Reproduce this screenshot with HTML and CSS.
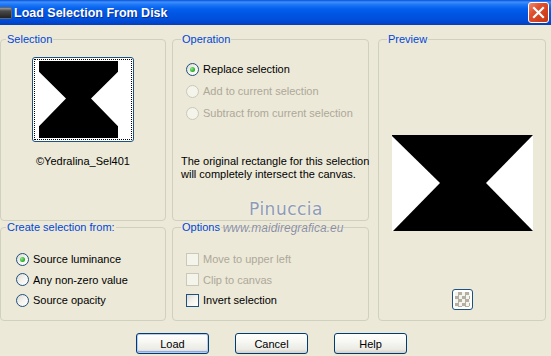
FILE: index.html
```html
<!DOCTYPE html>
<html lang="en">
<head>
  <meta charset="UTF-8">
  <title>Load Selection From Disk</title>
  <link rel="stylesheet" href="styles.css">
</head>
<body>
  <div class="titlebar">
    <span class="app-icon"></span>
    <span class="title">Load Selection From Disk</span>
    <span class="close-btn">
      <svg width="13" height="13" viewBox="0 0 13 13">
        <path d="M2 2L11 11M11 2L2 11" stroke="#fff" stroke-width="2.2" stroke-linecap="square"></path>
      </svg>
    </span>
  </div>

  <div class="dialog">
    <!-- top left: thumbnail of the selection file -->
    <fieldset class="group group-left sel-group">
      <legend>Selection</legend>
      <div class="thumb">
        <div class="thumb-focus">
          <svg width="91" height="77" viewBox="0 0 91 78" preserveAspectRatio="none">
            <rect width="91" height="78" fill="#fff"></rect>
            <polygon points="0,0 79,0 79,11 52,38 79,66 79,78 0,78 0,66 27,38 0,11" fill="#000"></polygon>
          </svg>
        </div>
      </div>
      <div class="thumb-name">©Yedralina_Sel401</div>
    </fieldset>

    <fieldset class="group op-group">
      <legend>Operation</legend>
      <div class="radio-list op-list">
        <label class="opt"><span class="radio checked"></span>Replace selection</label>
        <label class="opt disabled"><span class="radio"></span>Add to current selection</label>
        <label class="opt disabled"><span class="radio"></span>Subtract from current selection</label>
      </div>
      <p class="op-note">The original rectangle for this selection<br>will completely intersect the canvas.</p>
    </fieldset>

    <fieldset class="group preview-group">
      <legend>Preview</legend>
      <div class="preview-body">
        <svg class="preview-img" width="141" height="96" viewBox="0 0 141 96">
          <rect width="141" height="96" fill="#000"></rect>
          <polygon points="0,1 48,48 1,96 0,96" fill="#fff"></polygon>
          <polygon points="141,0 94,48 141,96" fill="#fff"></polygon>
        </svg>
        <span class="checker-btn"><span class="checker"></span></span>
      </div>
    </fieldset>

    <fieldset class="group group-left create-group">
      <legend>Create selection from:</legend>
      <div class="radio-list small-list">
        <label class="opt"><span class="radio checked"></span>Source luminance</label>
        <label class="opt"><span class="radio"></span>Any non-zero value</label>
        <label class="opt"><span class="radio"></span>Source opacity</label>
      </div>
    </fieldset>

    <fieldset class="group options-group">
      <legend>Options</legend>
      <div class="radio-list small-list">
        <label class="opt disabled"><span class="check"></span>Move to upper left</label>
        <label class="opt disabled"><span class="check"></span>Clip to canvas</label>
        <label class="opt"><span class="check"></span>Invert selection</label>
      </div>
    </fieldset>
  </div>

  <div class="buttons">
    <button class="btn default">Load</button>
    <button class="btn">Cancel</button>
    <button class="btn">Help</button>
  </div>

  <div class="watermark">
    <span class="wm-name">Pinuccia</span>
    <span class="wm-url">www.maidiregrafica.eu</span>
  </div>
</body>
</html>
```

FILE: styles.css
```css
* {
  box-sizing: border-box;
}

:root {
  --face: #ece9d8;
  --group-border: #d0d0bf;
  --legend: #0046d5;
  --control-border: #1c5180;
  --disabled: #aca899;
  --disabled-border: #cac8bb;
}

body {
  margin: 0;
  width: 551px;
  height: 356px;
  overflow: hidden;
  position: relative;
  background-color: var(--face);
  font-family: 'Liberation Sans', Arial, sans-serif;
  font-size: 11px;
  color: #000;
}

/* window caption */
.titlebar {
  height: 25px;
  display: flex;
  align-items: center;
  padding-right: 2px;
  background: linear-gradient(to bottom, #0850d8 0, #3d8ffb 2px, #1b74f5 5px, #0360ec 9px, #0055e3 14px, #0050dc 19px, #0045cc 23px, #0a3fb6 25px);
}

.app-icon {
  width: 12px;
  height: 12px;
  margin-top: 1px;
  border-radius: 0 2px 2px 0;
  background: linear-gradient(to bottom, #9a9a9a 0, #4a4a4a 3px, #222 100%);
  border: 1px solid #666;
  border-left: none;
}

.title {
  margin-left: 2px;
  flex: 1;
  color: #fff;
  font-weight: bold;
  font-size: 12.5px;
  text-shadow: 1px 1px 0 #0a2f9c;
}

.close-btn {
  width: 21px;
  height: 21px;
  display: flex;
  align-items: center;
  justify-content: center;
  border: 1px solid #fff;
  border-radius: 3px;
  background: linear-gradient(135deg, #ee8a70 0, #e0512f 35%, #d2401c 70%, #c23812 100%);
}

/* group boxes */
.dialog {
  display: grid;
  grid-template-columns: 166px 203px 177px;
  grid-template-rows: 188px 100px;
  padding-top: 8px;
}

.group {
  margin: 0;
  padding: 0;
  min-width: 0;
  border: 1px solid var(--group-border);
  border-radius: 4px;
}

.group legend {
  color: var(--legend);
  padding: 0 1px;
  margin-left: 8px;
  line-height: 13px;
}

.group-left legend {
  margin-left: 5px;
}

.sel-group { grid-column: 1; grid-row: 1; }
.op-group { grid-column: 2; grid-row: 1; margin-left: 6px; }
.preview-group { grid-column: 3; grid-row: 1 / span 2; margin-left: 9px; }
.create-group { grid-column: 1; grid-row: 2; }
.options-group { grid-column: 2; grid-row: 2; margin-left: 6px; }

/* selection thumbnail */
.thumb {
  width: 102px;
  height: 85px;
  margin: 11px auto 0;
  padding: 1px;
  border: 1px solid var(--control-border);
  border-radius: 3px;
  background-color: #fff;
}

.thumb-focus {
  height: 100%;
  padding: 1px 1px 0 4px;
  border: 1px dotted #000;
}

.thumb-focus svg {
  display: block;
}

.thumb-name {
  margin-top: 13px;
  text-align: center;
  line-height: 13px;
}

/* radios and checkboxes */
.radio-list {
  display: flex;
  flex-direction: column;
}

.opt {
  display: flex;
  align-items: center;
  gap: 4px;
  height: 22px;
}

.op-list {
  margin: 12px 0 0 13px;
}

.small-list {
  margin-top: 15px;
}

.small-list .opt {
  height: 20.5px;
}

.create-group .small-list {
  margin-left: 15px;
}

.options-group .small-list {
  margin-left: 13px;
}

.radio {
  width: 13px;
  height: 13px;
  flex: none;
  border-radius: 50%;
  border: 1px solid var(--control-border);
  background: linear-gradient(135deg, #dcdad0 0, #f4f3ee 50%, #fff 100%);
  display: flex;
  align-items: center;
  justify-content: center;
}

.radio.checked::after {
  content: '';
  width: 5px;
  height: 5px;
  border-radius: 50%;
  background: radial-gradient(circle at 35% 35%, #8de88d 0, #2cb22c 60%, #1a861a 100%);
}

.check {
  width: 13px;
  height: 13px;
  flex: none;
  border: 1px solid var(--control-border);
  background: linear-gradient(135deg, #dcdad0 0, #f4f3ee 50%, #fff 100%);
}

.opt.disabled {
  color: var(--disabled);
}

.opt.disabled .radio,
.opt.disabled .check {
  border-color: var(--disabled-border);
  background: #f5f4ea;
}

.op-note {
  margin: 31px 0 0 8px;
  line-height: 13px;
  white-space: nowrap;
}

/* preview */
.preview-body {
  display: flex;
  flex-direction: column;
  align-items: center;
}

.preview-img {
  display: block;
  margin-top: 89px;
}

.checker-btn {
  width: 21px;
  height: 21px;
  margin-top: 58px;
  padding: 2px;
  border: 1px solid var(--control-border);
  border-radius: 3px;
  background-color: #fff;
}

.checker {
  display: block;
  width: 100%;
  height: 100%;
  background: repeating-conic-gradient(#b3b0a2 0 25%, #f4f3ee 0 50%) 0 0 / 7px 7px;
}

/* push buttons */
.buttons {
  display: flex;
  gap: 26px;
  padding: 12px 0 0 136px;
}

.btn {
  width: 73px;
  height: 21px;
  padding: 0;
  font-family: inherit;
  font-size: 11px;
  color: #000;
  border: 1px solid #003c74;
  border-radius: 3px;
  background: linear-gradient(to bottom, #fff 0, #f7f7f3 40%, #ecebe5 80%, #d6d0c5 100%);
}

.btn.default {
  box-shadow: inset 0 0 0 1px #b9cbf0, inset 0 -1px 0 1px #8fa8e0;
}

/* watermark stamped over the screenshot */
.watermark {
  position: absolute;
  left: 224px;
  top: 199px;
  width: 124px;
  display: flex;
  flex-direction: column;
  align-items: center;
  pointer-events: none;
}

.wm-name {
  font-family: 'DejaVu Sans', sans-serif;
  font-size: 17px;
  letter-spacing: 0.5px;
  line-height: 20px;
  color: #8e9bb5;
  text-shadow: 0 0 2px #fff;
}

.wm-url {
  margin: 3px 6px 0 0;
  font-style: italic;
  font-size: 12px;
  line-height: 13px;
  color: #8b8e9c;
  text-shadow: 0 0 1px #fff;
}
```
